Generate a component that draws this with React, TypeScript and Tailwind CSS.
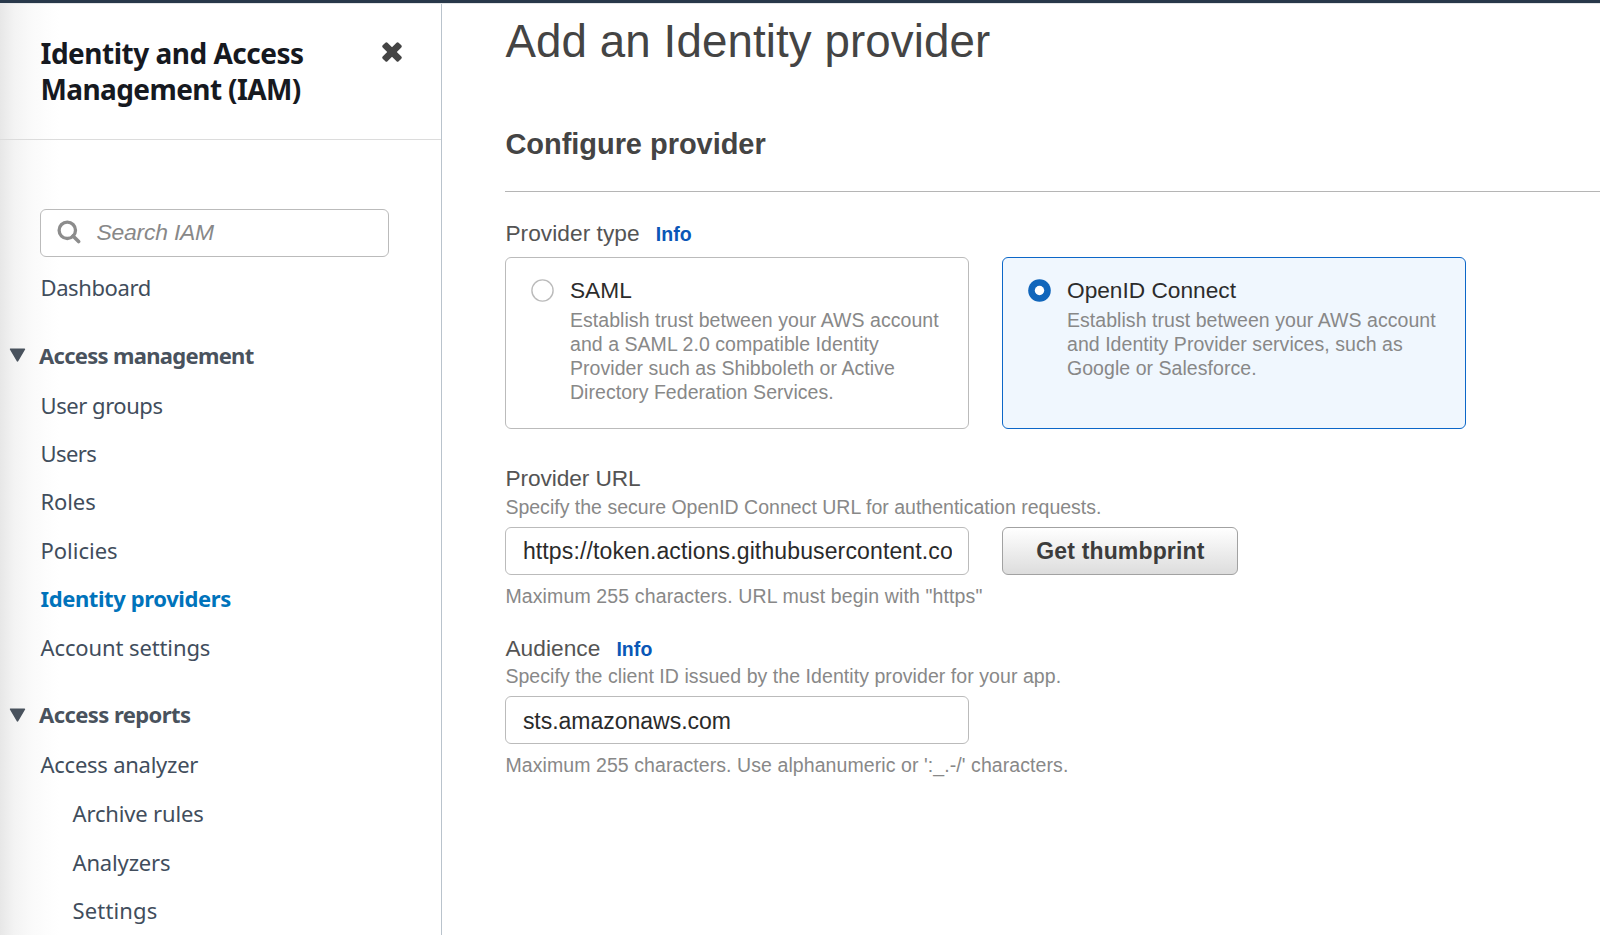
const NAV = 'font-["Noto_Sans",sans-serif]';

function NavItem({ label, className = '' }: { label: string; className?: string }) {
  return (
    <a className={`block h-[48.4px] pl-[40.5px] text-[22px] leading-[48.4px] text-[#414d5c] whitespace-nowrap ${className}`}>
      {label}
    </a>
  );
}

function NavSection({ label, className = '' }: { label: string; className?: string }) {
  return (
    <div className={`flex h-[50px] pl-[9px] text-[#49525d] ${className}`}>
      <svg className="mt-[17.5px] mr-[13px] h-[14px] w-[17px] shrink-0" viewBox="0 0 17 14" fill="#49525d">
        <path d="M1.6 1.2h13.8L8.5 12.8z" stroke="#49525d" strokeWidth="1.6" strokeLinejoin="round" />
      </svg>
      <span className="text-[22px] leading-[48.4px] font-bold whitespace-nowrap">{label}</span>
    </div>
  );
}

function Sidebar() {
  return (
    <nav className={`${NAV} h-[931px] w-[442px] shrink-0 overflow-hidden border-r border-[#b9c3cc] bg-[linear-gradient(to_right,#e7e7e7_0px,#f3f3f3_14px,#fafafa_32px,#fefefe_52px,#ffffff_60px)]`}>
      <header className="flex h-[136px] items-start justify-between border-b border-[#dcdcdc] pt-[32px] pr-[38px] pl-[40.5px]">
        <h2 className="text-[28px] leading-[35.5px] font-bold text-[#16191f]">
          <span className="block tracking-[-0.5px] whitespace-nowrap">Identity and Access</span>
          <span className="block tracking-[-0.6px] whitespace-nowrap">Management (IAM)</span>
        </h2>
        <svg className="mt-[4.7px] h-[22px] w-[22px]" viewBox="0 0 22 22" fill="#444444">
          <rect x="-0.3" y="7.6" width="22.6" height="6.8" rx="1.5" transform="rotate(45 11 11)" />
          <rect x="-0.3" y="7.6" width="22.6" height="6.8" rx="1.5" transform="rotate(-45 11 11)" />
        </svg>
      </header>
      <div className="mt-[68.5px] ml-[40.4px] flex h-12 w-[348.5px] items-center rounded-[6px] border-[1.5px] border-[#bbbbbb] bg-white pb-px pl-4">
        <svg className="size-6" viewBox="0 0 24 24" fill="none" stroke="#8c8c8c">
          <circle cx="10.3" cy="10.3" r="8.2" strokeWidth="3.3" />
          <path d="M16 16l5.6 5.6" strokeWidth="3.6" strokeLinecap="round" />
        </svg>
        <span className='ml-[15px] font-["Liberation_Sans",sans-serif] text-[22.9px] leading-7 tracking-[-0.2px] text-[#888888] italic'>
          Search IAM
        </span>
      </div>
      <NavItem label="Dashboard" className="mt-[6px] tracking-[-0.4px]" />
      <NavSection label="Access management" className="mt-[19.8px] tracking-[-0.7px]" />
      <NavItem label="User groups" className="tracking-[-0.45px]" />
      <NavItem label="Users" className="tracking-[-0.6px]" />
      <NavItem label="Roles" className="tracking-[-0.1px]" />
      <NavItem label="Policies" className="tracking-[0px]" />
      <NavItem label="Identity providers" className="font-bold tracking-[-0.4px] !text-[#0073bb]" />
      <NavItem label="Account settings" className="mt-[0.3px] tracking-[-0.11px]" />
      <NavSection label="Access reports" className="mt-[19px] tracking-[-0.57px]" />
      <NavItem label="Access analyzer" className="tracking-[-0.25px]" />
      <NavItem label="Archive rules" className="mt-[0.4px] !pl-[72.5px] tracking-[-0.16px]" />
      <NavItem label="Analyzers" className="!pl-[72.5px] tracking-[-0.15px]" />
      <NavItem label="Settings" className="!pl-[72.5px] tracking-[0.16px]" />
    </nav>
  );
}

function Label({ text, info, className = '' }: { text: string; info?: boolean; className?: string }) {
  return (
    <div className={`flex h-7 items-baseline gap-4 text-[22.7px] leading-7 tracking-[0.05px] text-[#545454] ${className}`}>
      <span>{text}</span>
      {info && <a className="text-[19.5px] font-bold text-[#0a57b7]">Info</a>}
    </div>
  );
}

function Hint({ text, className = '' }: { text: string; className?: string }) {
  return <p className={`h-6 text-[19.5px] leading-6 whitespace-nowrap text-[#888888] ${className}`}>{text}</p>;
}

function ProviderCard({ title, lines, selected = false }: { title: string; lines: string[]; selected?: boolean }) {
  return (
    <div
      className={`flex h-[172px] w-[464px] rounded-[6px] border-[1.5px] pt-[18px] pl-[24.6px] ${
        selected ? 'border-[#0c67c8] bg-[#f0f7fe]' : 'border-[#bbbbbb] bg-white'
      }`}
    >
      {selected ? (
        <svg className="mt-[3px] h-[23px] w-[23px] shrink-0" viewBox="0 0 23 23">
          <circle cx="11.5" cy="11.5" r="11.3" fill="#1166bb" />
          <circle cx="11.5" cy="11.5" r="4.7" fill="#ffffff" />
        </svg>
      ) : (
        <svg className="mt-[3px] h-[23px] w-[23px] shrink-0" viewBox="0 0 23 23">
          <circle cx="11.5" cy="11.5" r="10.6" fill="#ffffff" stroke="#bbbbbb" strokeWidth="1.4" />
        </svg>
      )}
      <div className="ml-[16px] whitespace-nowrap">
        <div className="text-[22.7px] leading-7 text-[#2c2c2c]">{title}</div>
        <div className="mt-[3.6px] text-[19.5px] leading-[24.2px] tracking-[0.05px] text-[#888888]">
          {lines.map((line) => (
            <div key={line}>{line}</div>
          ))}
        </div>
      </div>
    </div>
  );
}

const FIELD =
  'block h-12 w-[464px] rounded-[6px] border-[1.5px] border-[#bbbbbb] bg-white px-[16.5px] pt-[1.5px] text-[23px] text-[#2a2a2a] outline-none';

export default function App() {
  return (
    <div className='h-[935px] w-[1600px] overflow-hidden bg-white font-["Liberation_Sans",Arial,sans-serif]'>
      <div className="h-1 border-b border-[#e4e6e8] bg-[#28384a]" />
      <div className="flex">
        <Sidebar />
        <main className="min-w-0 flex-1 pt-[13.5px] pl-[63.4px]">
          <h1 className="text-[45.7px] leading-[48px] tracking-[0.1px] text-[#444444]">Add an Identity provider</h1>
          <h2 className="mt-[60.5px] h-[66px] border-b border-[#b5b5b5] text-[29px] leading-9 font-bold tracking-[-0.04px] text-[#444444]">
            Configure provider
          </h2>
          <Label text="Provider type" info className="mt-[27px]" />
          <div className="mt-[10px] flex gap-[33px]">
            <ProviderCard
              title="SAML"
              lines={[
                'Establish trust between your AWS account',
                'and a SAML 2.0 compatible Identity',
                'Provider such as Shibboleth or Active',
                'Directory Federation Services.',
              ]}
            />
            <ProviderCard
              selected
              title="OpenID Connect"
              lines={['Establish trust between your AWS account', 'and Identity Provider services, such as', 'Google or Salesforce.']}
            />
          </div>
          <Label text="Provider URL" className="mt-[35px] !tracking-[-0.08px]" />
          <Hint text="Specify the secure OpenID Connect URL for authentication requests." className="mt-[3px] tracking-[0.01px]" />
          <div className="mt-2 flex gap-[33px]">
            <input
              className={`${FIELD} tracking-[0.13px]`}
              readOnly
              value="https://token.actions.githubusercontent.com"
            />
            <button className="h-12 w-[236px] rounded-[6px] border-[1.5px] border-[#a2a2a2] bg-linear-to-b from-white to-[#dddddd] pt-px text-[23px] font-bold tracking-[0.15px] text-[#3c3c3c]">
              Get thumbprint
            </button>
          </div>
          <Hint text={'Maximum 255 characters. URL must begin with "https"'} className="mt-[9px] tracking-[0.13px]" />
          <Label text="Audience" info className="mt-[26px]" />
          <Hint text="Specify the client ID issued by the Identity provider for your app." className="mt-[2px] tracking-[0.06px]" />
          <input className={`${FIELD} mt-2 !pt-[3px] tracking-[-0.02px]`} readOnly value="sts.amazonaws.com" />
          <Hint text="Maximum 255 characters. Use alphanumeric or ':_.-/' characters." className="mt-[9px] tracking-[0.08px]" />
        </main>
      </div>
    </div>
  );
}
